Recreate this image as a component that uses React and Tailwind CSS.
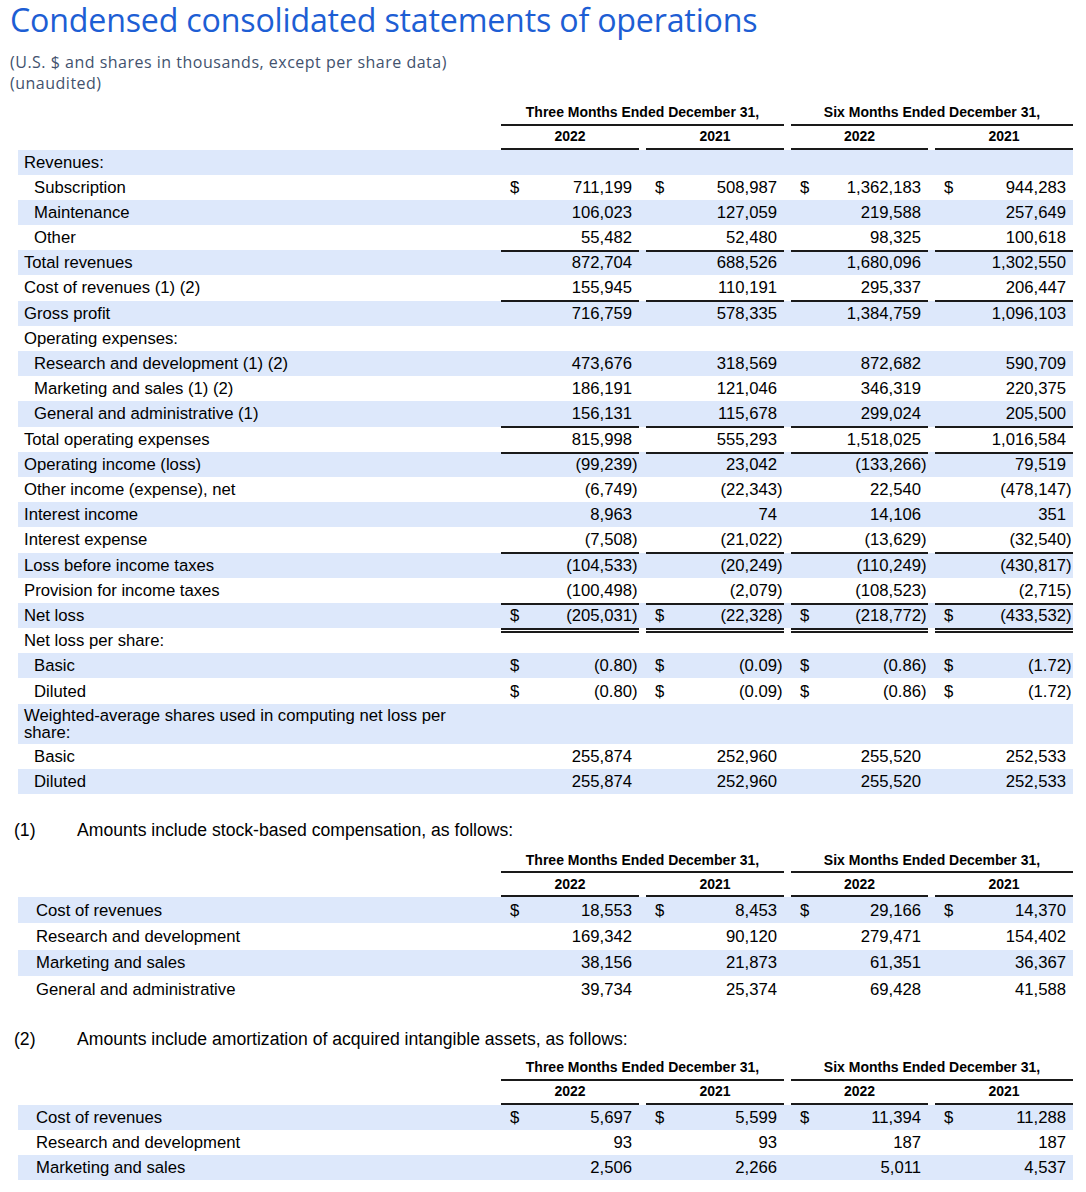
import React from 'react';

const COLS = 'grid grid-cols-[476px_138px_138px_137px_138px] gap-x-[7px]';
const SHADE = 'bg-[#dde8fb]';

// lignes du tableau principal
const MAIN_ROWS = [
  { label: 'Revenues:' },
  { label: 'Subscription', indent: true, dollar: true, vals: ['711,199', '508,987', '1,362,183', '944,283'] },
  { label: 'Maintenance', indent: true, vals: ['106,023', '127,059', '219,588', '257,649'] },
  { label: 'Other', indent: true, line: 'single', vals: ['55,482', '52,480', '98,325', '100,618'] },
  { label: 'Total revenues', vals: ['872,704', '688,526', '1,680,096', '1,302,550'] },
  { label: 'Cost of revenues (1) (2)', line: 'single', vals: ['155,945', '110,191', '295,337', '206,447'] },
  { label: 'Gross profit', vals: ['716,759', '578,335', '1,384,759', '1,096,103'] },
  { label: 'Operating expenses:' },
  { label: 'Research and development (1) (2)', indent: true, vals: ['473,676', '318,569', '872,682', '590,709'] },
  { label: 'Marketing and sales (1) (2)', indent: true, vals: ['186,191', '121,046', '346,319', '220,375'] },
  { label: 'General and administrative (1)', indent: true, line: 'single', vals: ['156,131', '115,678', '299,024', '205,500'] },
  { label: 'Total operating expenses', line: 'single', vals: ['815,998', '555,293', '1,518,025', '1,016,584'] },
  { label: 'Operating income (loss)', vals: ['(99,239)', '23,042', '(133,266)', '79,519'] },
  { label: 'Other income (expense), net', vals: ['(6,749)', '(22,343)', '22,540', '(478,147)'] },
  { label: 'Interest income', vals: ['8,963', '74', '14,106', '351'] },
  { label: 'Interest expense', line: 'single', vals: ['(7,508)', '(21,022)', '(13,629)', '(32,540)'] },
  { label: 'Loss before income taxes', vals: ['(104,533)', '(20,249)', '(110,249)', '(430,817)'] },
  { label: 'Provision for income taxes', line: 'single', vals: ['(100,498)', '(2,079)', '(108,523)', '(2,715)'] },
  { label: 'Net loss', dollar: true, line: 'double', vals: ['(205,031)', '(22,328)', '(218,772)', '(433,532)'] },
  { label: 'Net loss per share:' },
  { label: 'Basic', indent: true, dollar: true, vals: ['(0.80)', '(0.09)', '(0.86)', '(1.72)'] },
  { label: 'Diluted', indent: true, dollar: true, vals: ['(0.80)', '(0.09)', '(0.86)', '(1.72)'] },
  { label: 'weighted', tall: true },
  { label: 'Basic', indent: true, vals: ['255,874', '252,960', '255,520', '252,533'] },
  { label: 'Diluted', indent: true, vals: ['255,874', '252,960', '255,520', '252,533'] }
];

const SBC_ROWS = [
  { label: 'Cost of revenues', dollar: true, vals: ['18,553', '8,453', '29,166', '14,370'] },
  { label: 'Research and development', vals: ['169,342', '90,120', '279,471', '154,402'] },
  { label: 'Marketing and sales', vals: ['38,156', '21,873', '61,351', '36,367'] },
  { label: 'General and administrative', vals: ['39,734', '25,374', '69,428', '41,588'] }
];

const AMORT_ROWS = [
  { label: 'Cost of revenues', dollar: true, vals: ['5,697', '5,599', '11,394', '11,288'] },
  { label: 'Research and development', vals: ['93', '93', '187', '187'] },
  { label: 'Marketing and sales', vals: ['2,506', '2,266', '5,011', '4,537'] }
];

const borderFor = (line, color) => {
  if (line === 'single') return `border-b-2 ${color}`;
  if (line === 'double') return `border-b-[5px] border-double ${color}`;
  return '';
};

const ValueCell = ({ value, dollar, line }) => {
  const negative = value.endsWith(')');
  return (
    <div className={`flex items-center justify-between ${borderFor(line, 'border-[#1a1a1a]')}`}>
      <span className="pl-[9px]">{dollar ? '$' : ''}</span>
      <span className={negative ? 'pr-[1.4px]' : 'pr-[7px]'}>{value}</span>
    </div>
  );
};

const PeriodHeader = () => (
  <>
    <div className={`${COLS} h-[24px] text-[14px] font-bold`}>
      <div />
      <div className="col-span-2 flex items-center justify-center border-b-2 border-[#1a1a1a]">
        Three Months Ended December 31,
      </div>
      <div className="col-span-2 flex items-center justify-center border-b-2 border-[#1a1a1a]">
        Six Months Ended December 31,
      </div>
    </div>
    <div className={`${COLS} h-[24px] text-[14px] font-bold`}>
      <div />
      {['2022', '2021', '2022', '2021'].map((y, i) => (
        <div key={i} className="flex items-center justify-center border-b-2 border-[#1a1a1a]">
          {y}
        </div>
      ))}
    </div>
  </>
);

const Footnote = ({ num, children, className }) => (
  <div className={`flex items-center h-[21px] text-[17.6px] ${className}`}>
    <span className="w-[77px] pl-[14px]">{num}</span>
    <span>{children}</span>
  </div>
);

export default function App() {
  return (
    <div className="bg-white text-black w-[1086px] min-h-[1192px] font-['Liberation_Sans',Arial,sans-serif]">
      <h1 className="pl-[10px] pt-[2px] text-[32.2px] leading-[36px] text-[#1d5ed4] font-['Open_Sans',sans-serif] tracking-[-0.2px]">
        Condensed consolidated statements of operations
      </h1>
      <div className="pl-[10px] mt-[13.5px] text-[16px] leading-[21px] tracking-[0.5px] text-[#42526e] font-medium font-['Open_Sans',sans-serif]">
        <div>(U.S. $ and shares in thousands, except per share data)</div>
        <div>(unaudited)</div>
      </div>

      <div className="ml-[18px] w-[1055px] mt-[8px] text-[16.7px]">
        <PeriodHeader />
        {MAIN_ROWS.map((row, idx) => {
          const shade = idx % 2 === 0 ? SHADE : '';
          if (row.tall) {
            return (
              <div key={idx} className={`${COLS} h-[40px] ${shade}`}>
                <div className="pl-[6px] pt-[3px] leading-[17px]">
                  Weighted-average shares used in computing net loss per
                  <br />
                  share:
                </div>
              </div>
            );
          }
          return (
            <div key={idx} className={`${COLS} h-[25.2px] ${shade}`}>
              <div
                className={`flex items-center ${row.indent ? 'pl-[16px]' : 'pl-[6px]'} ${borderFor(row.line, 'border-transparent')}`}
              >
                {row.label}
              </div>
              {row.vals &&
                row.vals.map((v, i) => <ValueCell key={i} value={v} dollar={row.dollar} line={row.line} />)}
            </div>
          );
        })}
      </div>

      <Footnote num="(1)" className="mt-[25.5px]">
        Amounts include stock-based compensation, as follows:
      </Footnote>
      <div className="ml-[18px] w-[1055px] mt-[8.5px] text-[16.7px]">
        <PeriodHeader />
        {SBC_ROWS.map((row, idx) => (
          <div key={idx} className={`${COLS} h-[26.4px] ${idx % 2 === 0 ? SHADE : ''}`}>
            <div className="flex items-center pl-[18px]">{row.label}</div>
            {row.vals.map((v, i) => <ValueCell key={i} value={v} dollar={row.dollar} />)}
          </div>
        ))}
      </div>

      <Footnote num="(2)" className="mt-[26px]">
        Amounts include amortization of acquired intangible assets, as follows:
      </Footnote>
      <div className="ml-[18px] w-[1055px] mt-[7px] text-[16.7px]">
        <PeriodHeader />
        {AMORT_ROWS.map((row, idx) => (
          <div key={idx} className={`${COLS} h-[25.2px] ${idx % 2 === 0 ? SHADE : ''}`}>
            <div className="flex items-center pl-[18px]">{row.label}</div>
            {row.vals.map((v, i) => <ValueCell key={i} value={v} dollar={row.dollar} />)}
          </div>
        ))}
      </div>
    </div>
  );
}
